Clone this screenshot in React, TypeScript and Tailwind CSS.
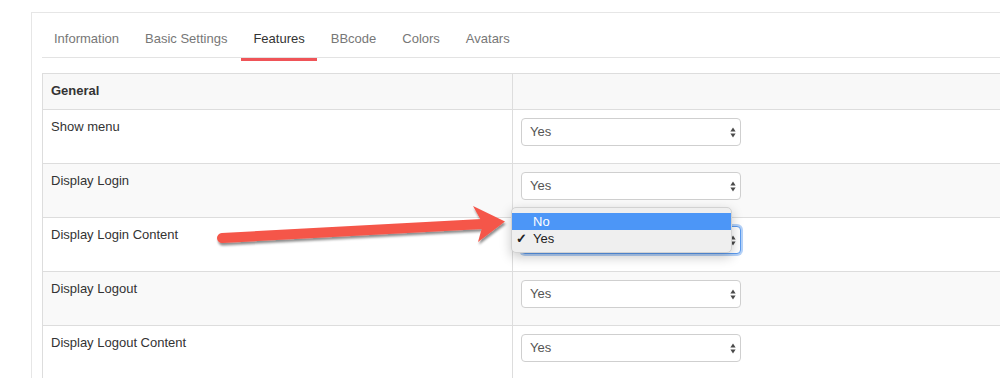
import React from 'react';

const tabs = ['Information', 'Basic Settings', 'Features', 'BBcode', 'Colors', 'Avatars'];

const rows = [
  { label: 'Show menu', striped: false, open: false },
  { label: 'Display Login', striped: true, open: false },
  { label: 'Display Login Content', striped: false, open: true },
  { label: 'Display Logout', striped: true, open: false },
  { label: 'Display Logout Content', striped: false, open: false }
];

function SelectArrows() {
  return (
    <svg width="6" height="11" viewBox="0 0 6 11" className="shrink-0">
      <path d="M3 0.5 L5.6 4.5 L0.4 4.5 Z" fill="#4a4a4a" />
      <path d="M3 10.5 L5.6 6.5 L0.4 6.5 Z" fill="#4a4a4a" />
    </svg>
  );
}

function YesSelect({ focused }: { focused?: boolean }) {
  return (
    <div
      className={
        focused
          ? 'flex h-[28px] w-[220px] items-center justify-between rounded-[4px] border border-[#5b9bf0] bg-white pl-[8px] pr-[4px] text-[13px] text-[#555] shadow-[0_0_0_2px_rgba(91,155,240,0.45)]'
          : 'flex h-[28px] w-[220px] items-center justify-between rounded-[4px] border border-[#cfcfcf] bg-white pl-[8px] pr-[4px] text-[13px] text-[#555]'
      }
    >
      {/* the open menu covers the value of the focused select */}
      <span className={focused ? 'invisible' : ''}>Yes</span>
      <SelectArrows />
    </div>
  );
}

function OpenMenu() {
  return (
    <div className="absolute left-[-10px] top-[-19px] z-10 h-[46px] w-[221px] rounded-[5px] border border-[#d2d2d2] bg-[#efefef] pt-[5px] text-[13px] shadow-[0_4px_12px_rgba(0,0,0,0.22)]">
      <div className="flex h-[17px] items-center bg-[#4c96f7] pl-[21px] text-white">No</div>
      <div className="flex h-[17px] items-center text-[#222]">
        <span className="w-[21px] pl-[4px] text-[13px] font-bold leading-none">✓</span>
        <span>Yes</span>
      </div>
    </div>
  );
}

function Arrow() {
  return (
    <svg className="pointer-events-none absolute left-0 top-0 z-20" width="1000" height="378" viewBox="0 0 1000 378">
      <defs>
        <filter id="arrowShadow" x="-10%" y="-50%" width="120%" height="200%">
          <feDropShadow dx="1" dy="2.5" stdDeviation="1.3" floodColor="#000" floodOpacity="0.45" />
        </filter>
      </defs>
      <g filter="url(#arrowShadow)">
        <line x1="222" y1="238" x2="482" y2="224" stroke="#f5564a" strokeWidth="10" strokeLinecap="round" />
        <path d="M473 206 L505 221.5 L478 242 L483 224 Z" fill="#f5564a" />
      </g>
    </svg>
  );
}

export default function App() {
  return (
    <div
      className="relative h-[378px] w-[1000px] overflow-hidden bg-white pl-[31px] pt-[12px] text-[13px] text-[#333]"
      style={{ fontFamily: '"Liberation Sans", Arial, sans-serif' }}
    >
      <div className="h-[400px] w-[1000px] border-l border-t border-[#e6e6e6] pl-[10px] pt-[6px]">
        {/* tabs */}
        <div className="flex h-[39px] border-b border-[#e3e3e3]">
          {tabs.map((tab) => (
            <div
              key={tab}
              className={
                tab === 'Features'
                  ? 'relative mr-[2px] h-[38px] px-[12px] pt-[11px] leading-[18px] text-[#333]'
                  : 'relative mr-[2px] h-[38px] px-[12px] pt-[11px] leading-[18px] text-[#777]'
              }
            >
              {tab}
              {tab === 'Features' && (
                <div className="absolute bottom-[-4px] left-0 h-[3px] w-full bg-[#ef5458]" />
              )}
            </div>
          ))}
        </div>

        {/* table */}
        <div className="mt-[15px] w-[1000px] border-l border-t border-[#dddddd]">
          <div className="flex h-[36px] border-b border-[#dddddd] bg-[#f8f8f8]">
            <div className="w-[470px] border-r border-[#dddddd] px-[8px] pt-[8px] font-bold leading-[18px]">
              General
            </div>
            <div className="flex-1" />
          </div>
          {rows.map((row) => (
            <div
              key={row.label}
              className={
                row.striped
                  ? 'flex h-[54px] border-b border-[#dddddd] bg-[#f9f9f9]'
                  : 'flex h-[54px] border-b border-[#dddddd] bg-white'
              }
            >
              <div className="w-[470px] border-r border-[#dddddd] px-[8px] pt-[8px] leading-[18px]">
                {row.label}
              </div>
              <div className="flex-1 px-[8px] pt-[8px]">
                <div className="relative w-[220px]">
                  <YesSelect focused={row.open} />
                  {row.open && <OpenMenu />}
                </div>
              </div>
            </div>
          ))}
        </div>
      </div>
      <Arrow />
    </div>
  );
}
